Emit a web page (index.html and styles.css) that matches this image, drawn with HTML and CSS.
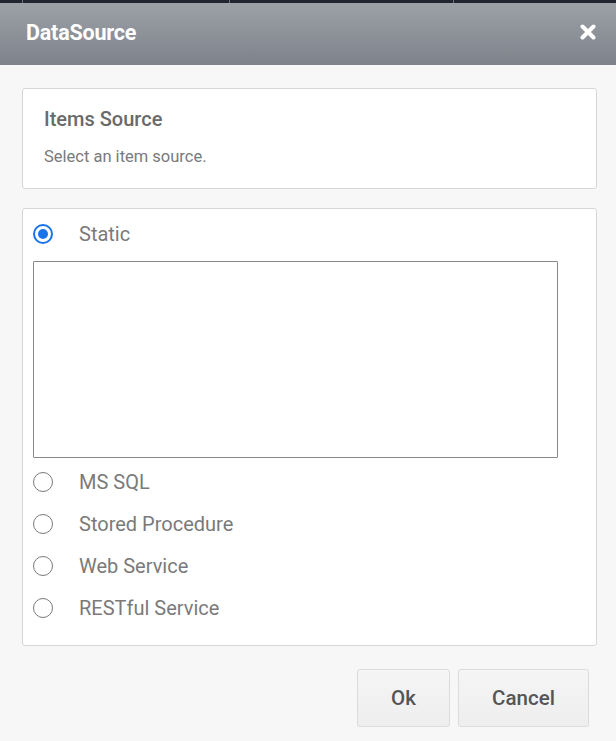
FILE: index.html
```html
<!DOCTYPE html>
<html>
<head>
<meta charset="utf-8">
<link rel="stylesheet" href="styles.css">
</head>
<body>
<div class="topstrip"><span class="tick t1"></span><span class="tick t2"></span><span class="tick t3"></span></div>
<div class="dialog">
  <div class="header">
    <span class="title">DataSource</span>
    <svg class="close" width="16" height="16" viewBox="0 0 16 16"><path d="M2.5 2.5 L13.5 13.5 M13.5 2.5 L2.5 13.5" stroke="#fff" stroke-width="4" stroke-linecap="round"/></svg>
  </div>
  <div class="body">
    <div class="card info">
      <div class="info-title">Items Source</div>
      <div class="info-sub">Select an item source.</div>
    </div>
    <div class="card options">
      <label class="opt"><span class="radio checked"></span><span class="lbl">Static</span></label>
      <textarea class="static-text"></textarea>
      <label class="opt"><span class="radio"></span><span class="lbl">MS SQL</span></label>
      <label class="opt"><span class="radio"></span><span class="lbl">Stored Procedure</span></label>
      <label class="opt"><span class="radio"></span><span class="lbl">Web Service</span></label>
      <label class="opt"><span class="radio"></span><span class="lbl">RESTful Service</span></label>
    </div>
    <div class="buttons">
      <button class="btn ok">Ok</button>
      <button class="btn cancel">Cancel</button>
    </div>
  </div>
</div>
</body>
</html>
```
FILE: styles.css
```css
html, body {
  margin: 0;
  padding: 0;
  background: #f7f7f7;
  font-family: Roboto, "Liberation Sans", sans-serif;
}
.topstrip {
  height: 3px;
  background: #1f2630;
  position: relative;
}
.tick {
  position: absolute;
  top: 0;
  width: 1px;
  height: 3px;
  background: #6b717a;
}
.t1 { left: 22px; }
.t2 { left: 229px; }
.t3 { left: 453px; }
.header {
  height: 62px;
  background: linear-gradient(#9ca0a7, #7e838b);
  display: flex;
  align-items: center;
  justify-content: space-between;
  padding: 0 20px 0 26px;
}
.title {
  color: #fff;
  font-weight: 700;
  font-size: 21.5px;
  letter-spacing: -0.2px;
  margin-top: -3px;
}
.close {
  margin-top: -4px;
}
.body {
  padding: 23px 19px 0 22px;
}
.card {
  background: #fff;
  border: 1px solid #d6d6d6;
  border-radius: 3px;
}
.info {
  height: 101px;
  box-sizing: border-box;
  padding: 19px 21px 0;
}
.info-title {
  font-size: 20px;
  font-weight: 500;
  color: #6a6a6a;
  line-height: 22px;
}
.info-sub {
  font-size: 16.5px;
  color: #7a7a7a;
  margin-top: 17px;
  line-height: 20px;
}
.options {
  margin-top: 19px;
  height: 438px;
  box-sizing: border-box;
  padding: 10px 10px 0;
  display: flex;
  flex-direction: column;
  align-items: flex-start;
}
.opt {
  display: flex;
  align-items: center;
  height: 30px;
}
.opt + .opt { margin-top: 12px; }
.static-text + .opt { margin-top: 9px; }
.radio {
  width: 20px;
  height: 20px;
  box-sizing: border-box;
  border: 1.5px solid #7a7a7a;
  border-radius: 50%;
  display: flex;
  align-items: center;
  justify-content: center;
}
.radio.checked {
  border: 2px solid #1a73e8;
}
.radio.checked::after {
  content: "";
  width: 10px;
  height: 10px;
  border-radius: 50%;
  background: #1a73e8;
}
.lbl {
  margin-left: 26px;
  font-size: 20px;
  color: #7a7a7a;
}
.static-text {
  width: 525px;
  height: 197px;
  box-sizing: border-box;
  border: 1.5px solid #888;
  border-radius: 1px;
  margin: 12px 0 0;
  resize: none;
  background: #fff;
}
.buttons {
  display: flex;
  justify-content: flex-end;
  gap: 8px;
  padding-top: 23px;
  padding-right: 8px;
}
.btn {
  height: 58px;
  border: 1px solid #dcdcdc;
  border-radius: 3px;
  background: linear-gradient(#f5f5f5, #eeeeee);
  font-family: Roboto, "Liberation Sans", sans-serif;
  font-size: 20.5px;
  font-weight: 500;
  color: #555;
  box-shadow: 0 1px 1px rgba(0,0,0,0.06);
}
.ok { width: 93px; }
.cancel { width: 131px; }
```
